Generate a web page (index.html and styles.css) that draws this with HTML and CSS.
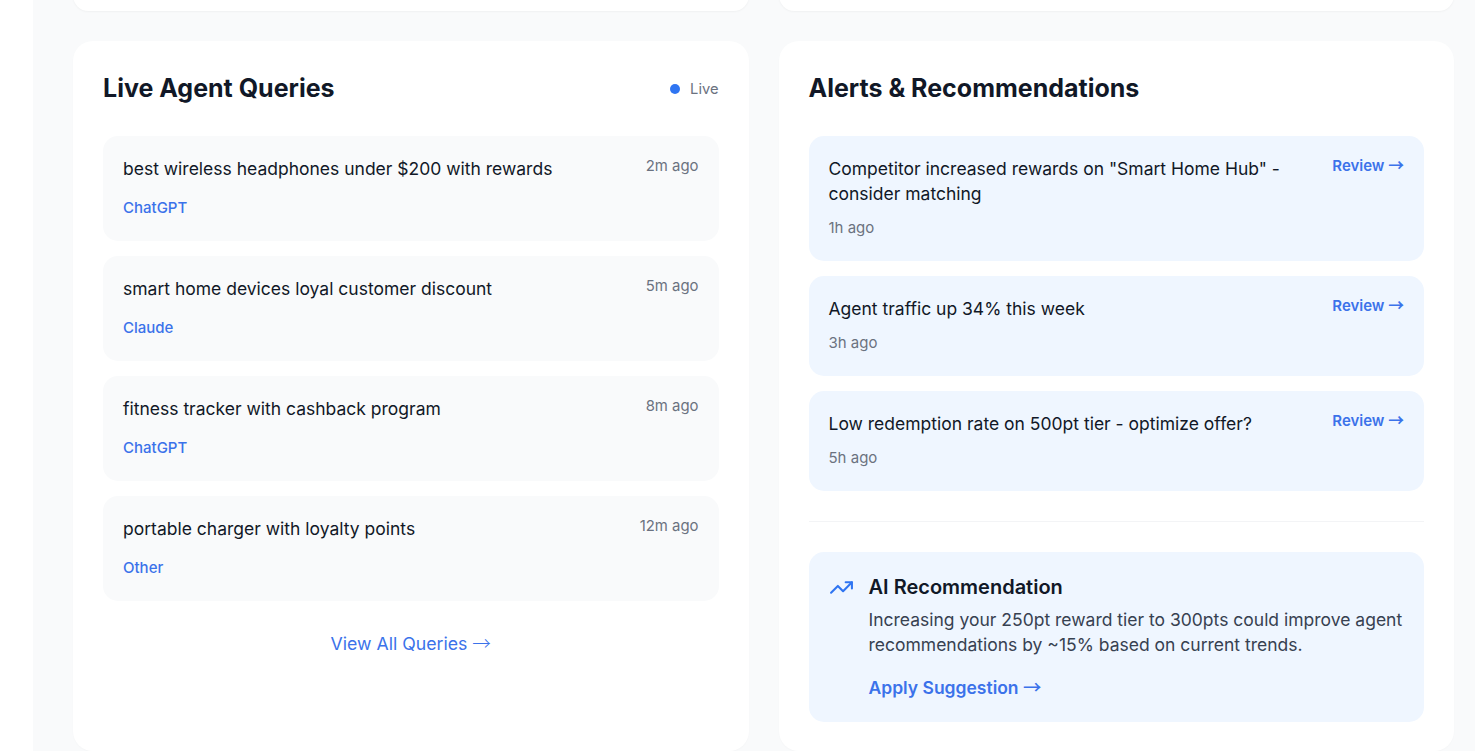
FILE: index.html
```html
<!DOCTYPE html>
<html lang="en">
<head>
<meta charset="utf-8">
<title>Dashboard</title>
<link rel="stylesheet" href="styles.css">
</head>
<body>
<div class="page">
  <aside class="side"></aside>
  <main class="main">
    <div class="stubs">
      <div class="stub"></div>
      <div class="stub"></div>
    </div>
    <div class="cols">
      <section class="card">
        <header class="card-head">
          <h2>Live Agent Queries</h2>
          <span class="live"><i class="dot"></i>Live</span>
        </header>
        <div class="list">
          <article class="query">
            <div class="query-top"><p class="q">best wireless headphones under $200 with rewards</p><span class="time">2m ago</span></div>
            <span class="src">ChatGPT</span>
          </article>
          <article class="query">
            <div class="query-top"><p class="q">smart home devices loyal customer discount</p><span class="time">5m ago</span></div>
            <span class="src">Claude</span>
          </article>
          <article class="query">
            <div class="query-top"><p class="q">fitness tracker with cashback program</p><span class="time">8m ago</span></div>
            <span class="src">ChatGPT</span>
          </article>
          <article class="query">
            <div class="query-top"><p class="q">portable charger with loyalty points</p><span class="time">12m ago</span></div>
            <span class="src">Other</span>
          </article>
        </div>
        <a class="view-all" href="#">View All Queries <span class="arrow">→</span></a>
      </section>
      <section class="card">
        <header class="card-head">
          <h2>Alerts &amp; Recommendations</h2>
        </header>
        <div class="list">
          <article class="alert">
            <div class="alert-body"><p class="q">Competitor increased rewards on "Smart Home Hub" - consider matching</p><span class="ago">1h ago</span></div>
            <a class="review" href="#">Review <span class="arrow">→</span></a>
          </article>
          <article class="alert">
            <div class="alert-body"><p class="q">Agent traffic up 34% this week</p><span class="ago">3h ago</span></div>
            <a class="review" href="#">Review <span class="arrow">→</span></a>
          </article>
          <article class="alert">
            <div class="alert-body"><p class="q">Low redemption rate on 500pt tier - optimize offer?</p><span class="ago">5h ago</span></div>
            <a class="review" href="#">Review <span class="arrow">→</span></a>
          </article>
        </div>
        <div class="rec-wrap">
          <div class="rec">
            <svg class="rec-icon" viewBox="0 0 24 24" fill="none" stroke="currentColor" stroke-width="2" stroke-linecap="round" stroke-linejoin="round" aria-hidden="true"><polyline points="22 7 13.5 15.5 8.5 10.5 2 17"/><polyline points="16 7 22 7 22 13"/></svg>
            <div class="rec-body">
              <h3>AI Recommendation</h3>
              <p>Increasing your 250pt reward tier to 300pts could improve agent recommendations by ~15% based on current trends.</p>
              <a class="apply" href="#">Apply Suggestion <span class="arrow">→</span></a>
            </div>
          </div>
        </div>
      </section>
    </div>
  </main>
</div>
</body>
</html>
```

FILE: styles.css
```css
* { box-sizing: border-box; }
html, body { margin: 0; height: 100%; overflow: hidden; background: #fff; }
body { font-family: Inter, "Liberation Sans", sans-serif; color: #111827; }
a { text-decoration: none; color: #3b72ea; }
h2, h3, p { margin: 0; }
.arrow { font-family: "Noto Sans CJK SC", sans-serif; font-size: 1.05em; line-height: 0; }
.view-all .arrow { font-weight: 300; }
.apply .arrow { font-weight: 500; }

.page { display: flex; height: 751px; }
.side { width: 33px; flex: none; background: #fff; }
.main { flex: 1; background: #f9fafb; padding: 0 21px 0 40px; overflow: hidden; }

.stubs { display: grid; grid-template-columns: 1fr 1fr; gap: 30px; height: 31px; margin-top: -20px; margin-bottom: 30px; }
.stub { background: #fff; border-radius: 20px; box-shadow: 0 1px 2px rgba(0,0,0,.04); }

.cols { display: grid; grid-template-columns: 1fr 1fr; gap: 30px; }
.card { background: #fff; border-radius: 20px; padding: 30px; height: 710px; box-shadow: 0 1px 2px rgba(0,0,0,.02); }
.card-head { display: flex; justify-content: space-between; align-items: center; height: 35px; margin-bottom: 30px; }
h2 { font-size: 25px; font-weight: 700; line-height: 35px; color: #111827; }

.live { display: flex; align-items: center; gap: 10px; font-size: 14.7px; color: #6b7280; }
.dot { width: 10px; height: 10px; border-radius: 50%; background: #2f75f2; }

.list { display: flex; flex-direction: column; gap: 15px; }
.query { background: #f9fafb; border-radius: 15px; padding: 20px; }
.query-top { display: flex; justify-content: space-between; align-items: flex-start; margin-bottom: 14px; }
.q { font-size: 17.5px; line-height: 25px; color: #111827; }
.time { font-size: 14.9px; line-height: 20px; color: #6b7280; }
.src { display: block; font-size: 15px; font-weight: 500; line-height: 26px; color: #3b72ea; }

.view-all { display: block; text-align: center; font-size: 17.7px; line-height: 26px; margin-top: 30px; color: #3b72ea; }

.alert { display: flex; justify-content: space-between; align-items: flex-start; gap: 30px; background: #eff6ff; border-radius: 15px; padding: 20px; }
.alert-body { flex: 1; }
.ago { display: block; font-size: 15px; line-height: 25px; margin-top: 9px; padding-bottom: 1px; color: #6b7280; }
.review { font-size: 15px; line-height: 20px; font-weight: 600; white-space: nowrap; color: #3b72ea; }

.rec-wrap { margin-top: 30px; padding-top: 30px; border-top: 1px solid #f3f4f6; }
.rec { display: flex; gap: 15px; background: #eff6ff; border-radius: 15px; padding: 20px; height: 170px; }
.rec-icon { width: 25px; height: 25px; flex: none; color: #2f75f2; margin-top: 3px; }
h3 { font-size: 20px; font-weight: 600; line-height: 30px; color: #111827; }
.rec-body { flex: 1; }
.rec-body p { font-size: 17.5px; line-height: 25px; color: #374151; margin-top: 5px; }
.apply { display: inline-block; font-size: 17.5px; font-weight: 600; line-height: 26px; margin-top: 18px; color: #3b72ea; }
```
